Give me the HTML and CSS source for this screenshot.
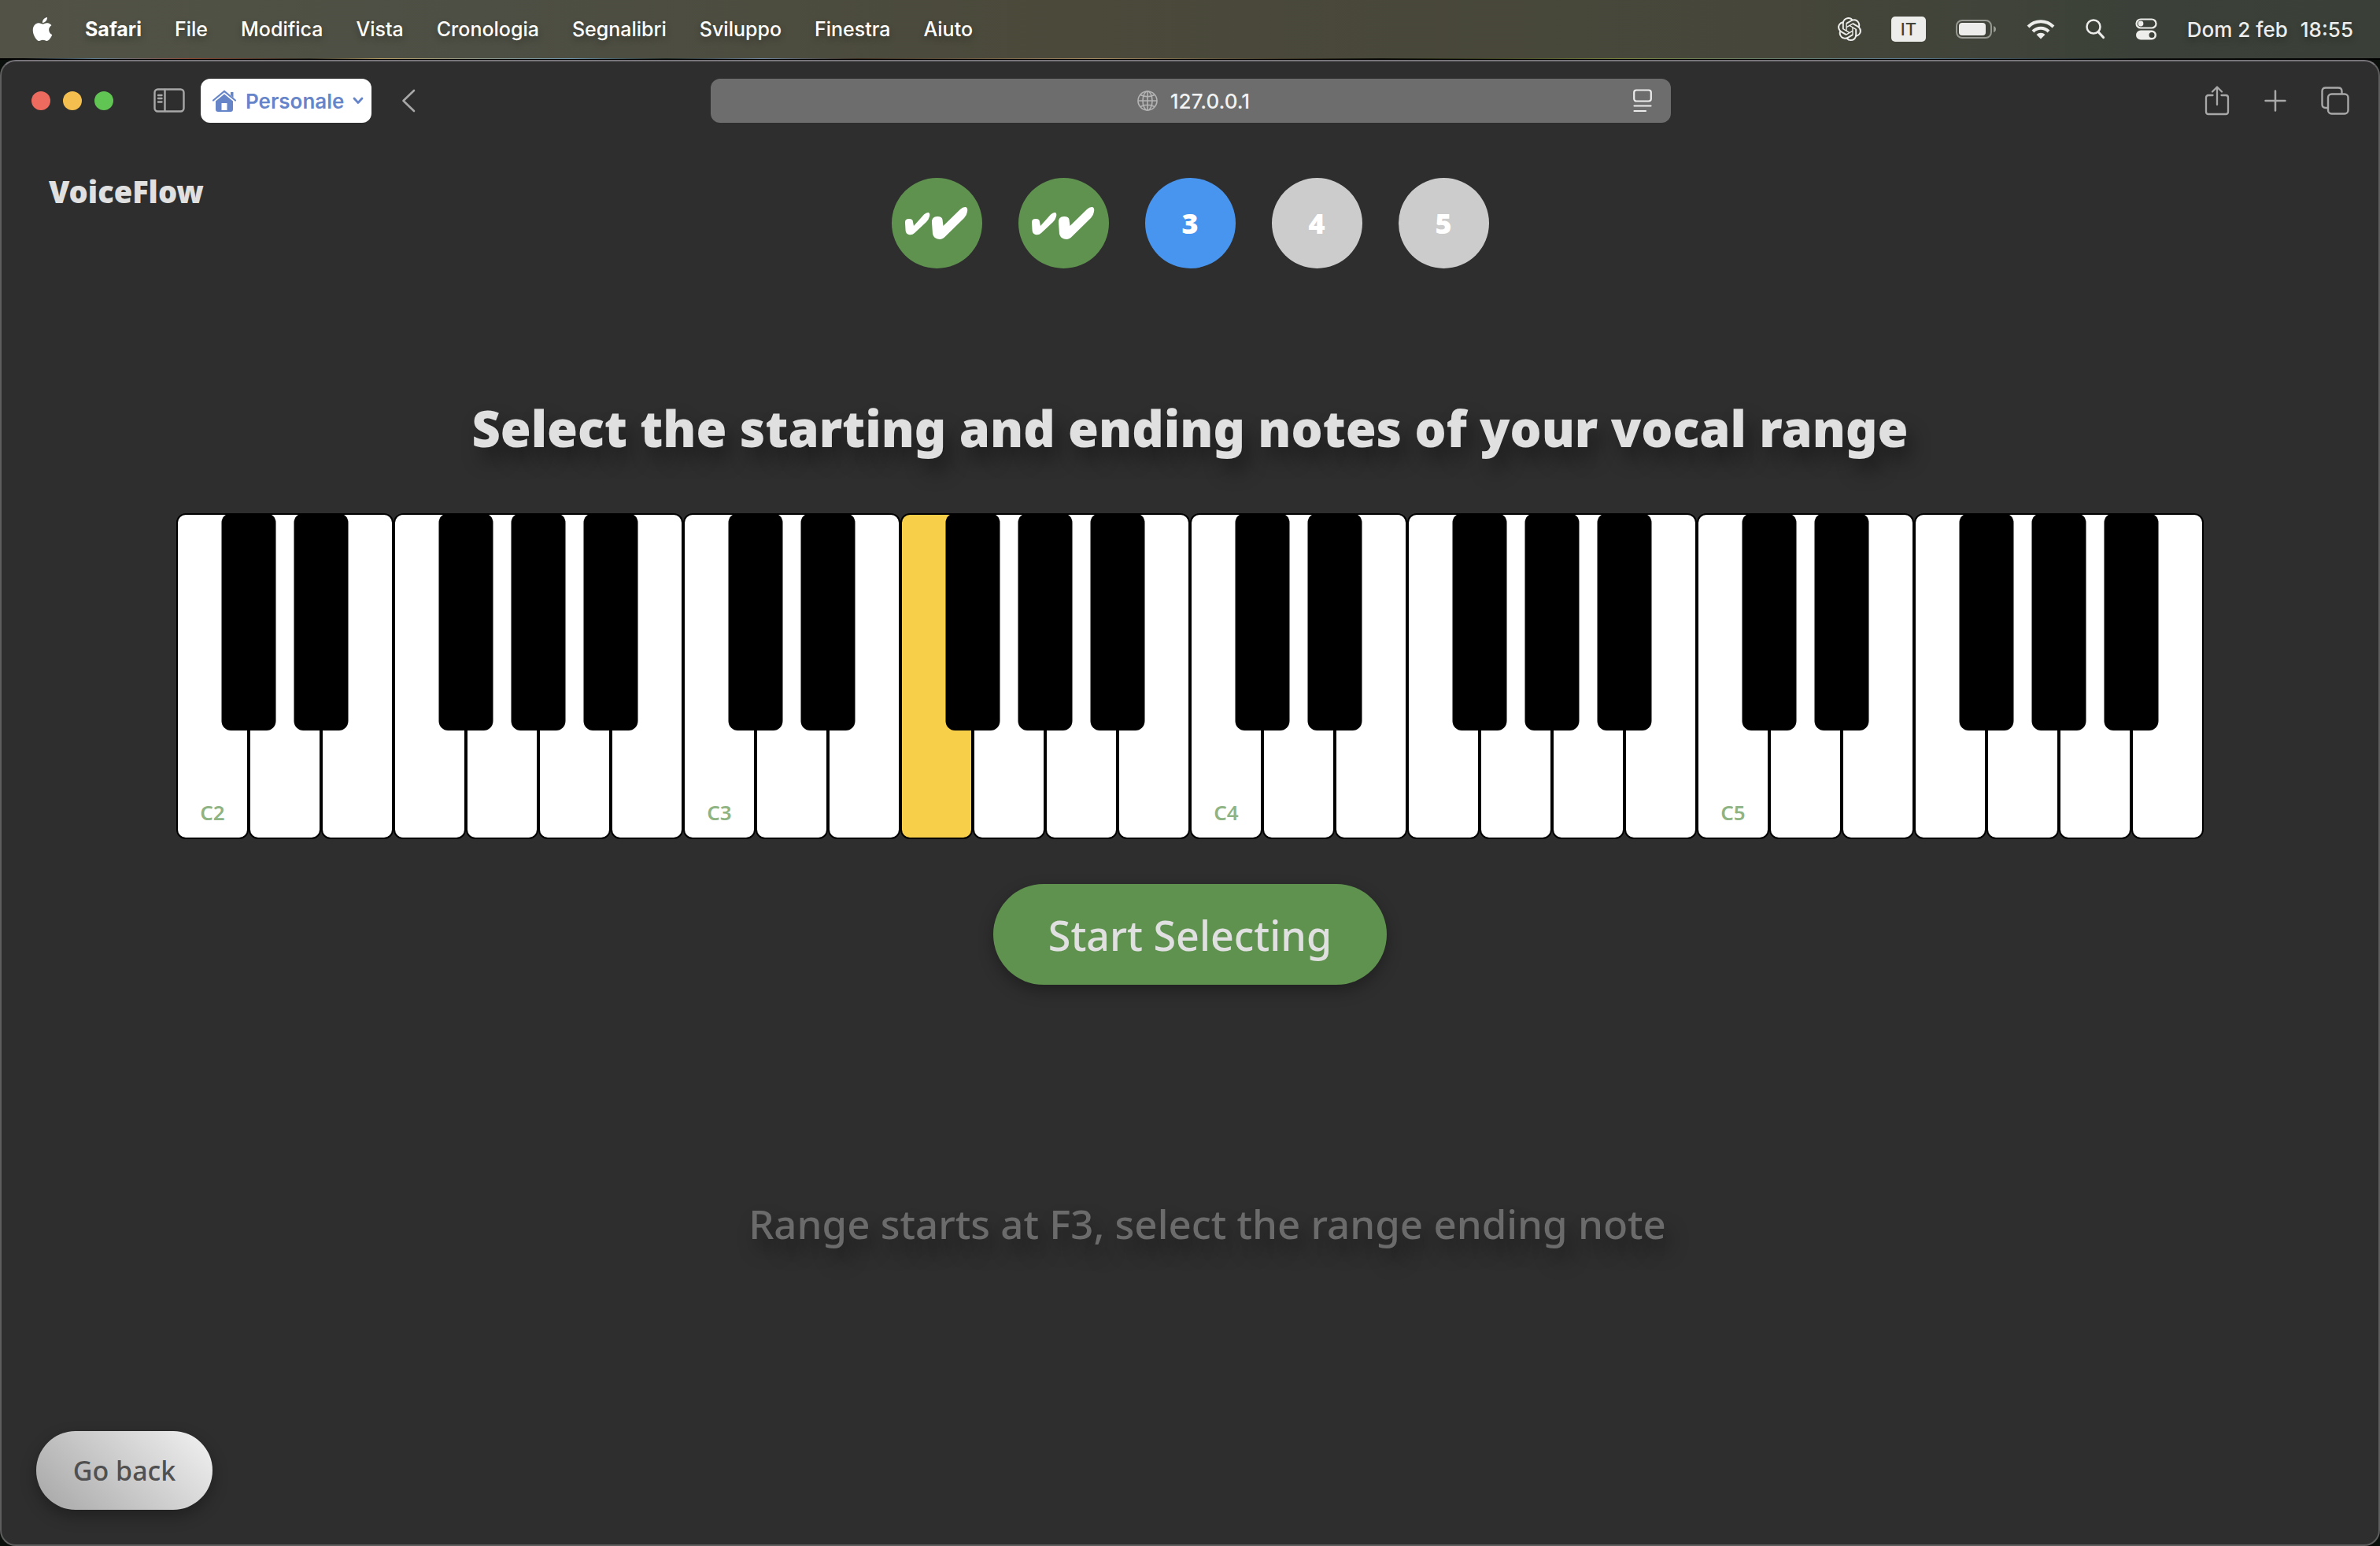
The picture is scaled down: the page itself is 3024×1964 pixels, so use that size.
FILE: index.html
```html
<!DOCTYPE html>
<html lang="en">
<head>
<meta charset="utf-8">
<meta name="viewport" content="width=device-width, initial-scale=1">
<title>VoiceFlow</title>
<link rel="stylesheet" href="styles.css">
</head>
<body>
<header class="menubar">
  <nav class="menus" lang="it">
    <button class="menu menu-apple" aria-label="Apple"><svg width="30" height="32" viewBox="0 0 24 24"><path fill="currentColor" d="M12.152 6.896c-.948 0-2.415-1.078-3.96-1.04-2.04.027-3.91 1.183-4.961 3.014-2.117 3.675-.546 9.103 1.519 12.09 1.013 1.454 2.208 3.09 3.792 3.039 1.52-.065 2.09-.987 3.935-.987 1.831 0 2.35.987 3.96.948 1.637-.026 2.676-1.48 3.676-2.948 1.156-1.688 1.636-3.325 1.662-3.415-.039-.013-3.182-1.221-3.22-4.857-.026-3.04 2.48-4.494 2.597-4.559-1.429-2.09-3.623-2.324-4.39-2.376-2-.156-3.675 1.09-4.61 1.09zM15.53 3.83c.843-1.012 1.4-2.427 1.245-3.83-1.207.052-2.662.805-3.532 1.818-.78.896-1.454 2.338-1.273 3.714 1.338.104 2.715-.688 3.559-1.701"/></svg></button>
    <button class="menu menu-app">Safari</button>
    <button class="menu">File</button>
    <button class="menu">Modifica</button>
    <button class="menu">Vista</button>
    <button class="menu">Cronologia</button>
    <button class="menu">Segnalibri</button>
    <button class="menu">Sviluppo</button>
    <button class="menu">Finestra</button>
    <button class="menu">Aiuto</button>
  </nav>
  <div class="status" lang="it">
    <svg width="30" height="30" viewBox="0 0 24 24"><path fill="currentColor" d="M22.2819 9.8211a5.9847 5.9847 0 0 0-.5157-4.9108 6.0462 6.0462 0 0 0-6.5098-2.9A6.0651 6.0651 0 0 0 4.9807 4.1818a5.9847 5.9847 0 0 0-3.9977 2.9 6.0462 6.0462 0 0 0 .7427 7.0966 5.98 5.98 0 0 0 .511 4.9107 6.051 6.051 0 0 0 6.5146 2.9001A5.9847 5.9847 0 0 0 13.2599 24a6.0557 6.0557 0 0 0 5.7718-4.2058 5.9894 5.9894 0 0 0 3.9977-2.9001 6.0557 6.0557 0 0 0-.7475-7.0729zm-9.022 12.6081a4.4755 4.4755 0 0 1-2.8764-1.0408l.1419-.0804 4.7783-2.7582a.7948.7948 0 0 0 .3927-.6813v-6.7369l2.02 1.1686a.071.071 0 0 1 .038.052v5.5826a4.504 4.504 0 0 1-4.4945 4.4944zm-9.6607-4.1254a4.4708 4.4708 0 0 1-.5346-3.0137l.142.0852 4.783 2.7582a.7712.7712 0 0 0 .7806 0l5.8428-3.3685v2.3324a.0804.0804 0 0 1-.0332.0615L9.74 19.9502a4.4992 4.4992 0 0 1-6.1408-1.6464zM2.3408 7.8956a4.485 4.485 0 0 1 2.3655-1.9728V11.6a.7664.7664 0 0 0 .3879.6765l5.8144 3.3543-2.0201 1.1685a.0757.0757 0 0 1-.071 0l-4.8303-2.7865A4.504 4.504 0 0 1 2.3408 7.872zm16.5963 3.8558L13.1038 8.364 15.1192 7.2a.0757.0757 0 0 1 .071 0l4.8303 2.7913a4.4944 4.4944 0 0 1-.6765 8.1042v-5.6772a.79.79 0 0 0-.407-.667zm2.0107-3.0231l-.142-.0852-4.7735-2.7818a.7759.7759 0 0 0-.7854 0L9.409 9.2297V6.8974a.0662.0662 0 0 1 .0284-.0615l4.8303-2.7866a4.4992 4.4992 0 0 1 6.6802 4.66zM8.3065 12.863l-2.02-1.1638a.0804.0804 0 0 1-.038-.0567V6.0742a4.4992 4.4992 0 0 1 7.3757-3.4537l-.142.0805L8.704 5.459a.7948.7948 0 0 0-.3927.6813zm1.0976-2.3654l2.602-1.4998 2.6069 1.4998v2.9994l-2.5974 1.4997-2.6067-1.4997Z"/></svg>
    <span class="input-source">IT</span>
    <svg width="52" height="24" viewBox="0 0 52 24"><rect x="1" y="1" width="44" height="22" rx="7" fill="none" stroke="currentColor" stroke-width="2" opacity=".5"/><rect x="4" y="4" width="34" height="16" rx="4" fill="currentColor"/><path d="M48 8q3 1 3 4t-3 4z" fill="currentColor" opacity=".5"/></svg>
    <svg width="36" height="26" viewBox="0 0 36 26"><g fill="none" stroke="currentColor" stroke-width="4"><path d="M2 10a22.500 22.500 0 0 1 32 0"/><path d="M8 16a14 14 0 0 1 20 0"/></g><path fill="currentColor" d="M18 25.500l-5.500-5.600a7.800 7.800 0 0 1 11 0z"/></svg>
    <svg width="26" height="28" viewBox="0 0 26 28"><g fill="none" stroke="currentColor" stroke-linecap="round"><circle cx="11" cy="11" r="8.500" stroke-width="2.500"/><path d="M17 17.500l6.500 7" stroke-width="3.200"/></g></svg>
    <svg width="28" height="28" viewBox="0 0 28 28"><rect x="1.500" y="1.500" width="25" height="11" rx="5.500" fill="none" stroke="currentColor" stroke-width="2.200"/><circle cx="7" cy="7" r="3.400" fill="currentColor"/><path fill="currentColor" fill-rule="evenodd" d="M7 15.500h14a6 6 0 0 1 0 12H7a6 6 0 0 1 0-12zm14 2.500a3.500 3.500 0 1 0 0 7 3.500 3.500 0 0 0 0-7z"/></svg>
    <time class="clock"><span>Dom 2 feb</span><span>18:55</span></time>
  </div>
</header>
<div class="wallpaper"></div>

<div class="window">
  <div class="toolbar" lang="it">
    <div class="toolbar-left">
      <div class="lights">
        <button class="light light-close" aria-label="Chiudi"></button>
        <button class="light light-minimize" aria-label="Riduci"></button>
        <button class="light light-zoom" aria-label="Ingrandisci"></button>
      </div>
      <button class="tool tool-sidebar" aria-label="Barra laterale"><svg width="40" height="32" viewBox="0 0 40 32"><g fill="none" stroke="currentColor" stroke-width="2.400" stroke-linecap="round"><rect x="1.500" y="1.500" width="37" height="28" rx="4"/><path d="M14.500 2v27M6 9h4.500M6 13h4.500M6 17.500h4.500"/></g></svg></button>
      <button class="profile">
        <svg width="32" height="28" viewBox="0 0 32 28"><path d="M2 13.500L16 2l14 11.500" fill="none" stroke="currentColor" stroke-width="2.200" stroke-linecap="round"/><path fill="currentColor" fill-rule="evenodd" d="M16 5.500l11 9V25q0 3-3 3H8q-3 0-3-3V14.500zM12.500 17v9h7v-9z"/><path d="M24 3h3.500v7L24 7z" fill="currentColor"/></svg>
        <span>Personale</span>
        <svg width="14" height="10" viewBox="0 0 14 10"><path d="M2 2l5 5.500L12 2" fill="none" stroke="currentColor" stroke-width="2.800" stroke-linecap="round" stroke-linejoin="round"/></svg>
      </button>
      <button class="tool tool-back" aria-label="Indietro"><svg width="18" height="30" viewBox="0 0 18 30"><path d="M16 2L2.500 15 16 28" fill="none" stroke="currentColor" stroke-width="2.600" stroke-linecap="round" stroke-linejoin="round"/></svg></button>
    </div>
    <div class="address">
      <label class="address-field">
        <svg width="26" height="26" viewBox="0 0 26 26"><g fill="none" stroke="currentColor" stroke-width="1.600"><circle cx="13" cy="13" r="12"/><ellipse cx="13" cy="13" rx="6" ry="12"/><path d="M13 1v24M1 13h24M4 5.500q9 4.500 18 0M4 20.500q9-4.500 18 0"/></g></svg>
        <input type="text" value="127.0.0.1" size="9" aria-label="Indirizzo">
      </label>
      <button class="reader" aria-label="Menu pagina"><svg width="24" height="30" viewBox="0 0 24 30"><g fill="none" stroke="currentColor" stroke-width="2.200" stroke-linecap="round"><rect x="1.200" y="1.500" width="21.600" height="14" rx="3"/><path d="M1.500 21.500h21M1.500 28H16"/></g></svg></button>
    </div>
    <div class="toolbar-right">
      <button class="tool" aria-label="Condividi"><svg width="32" height="38" viewBox="0 0 32 38"><g fill="none" stroke="currentColor" stroke-width="2.300" stroke-linecap="round" stroke-linejoin="round"><path d="M10.500 12H5q-3 0-3 3v18q0 3 3 3h22q3 0 3-3V15q0-3-3-3h-5.500M16 24V2M10 7.500L16 1.500l6 6"/></g></svg></button>
      <button class="tool" aria-label="Nuovo pannello"><svg width="28" height="28" viewBox="0 0 28 28"><path d="M14 1.500v25M1.500 14h25" stroke="currentColor" stroke-width="2.500" stroke-linecap="round"/></svg></button>
      <button class="tool" aria-label="Panoramica pannelli"><svg width="36" height="36" viewBox="0 0 36 36"><g fill="none" stroke="currentColor" stroke-width="2.400"><rect x="9" y="9.500" width="25.500" height="25" rx="4.500"/><path d="M9 27H6q-4.500 0-4.500-4.500V6Q1.500 1.500 6 1.500h16q4.500 0 4.500 4.500v3.500"/></g></svg></button>
    </div>
  </div>

  <main class="app">
    <div class="app-header">
      <a class="brand" href="#">VoiceFlow</a>
      <ol class="steps">
        <li class="step step-done" aria-label="1"><svg viewBox="0 0 115 115"><g fill="currentColor"><path d="M17 57Q16.500 52 22 52 27 52 27 56L28 61 41 46.500Q44 43.500 47 44 49 45.500 48 49 47 53 44 56L29 70Q26 73 21.500 72 18 71 17.600 67Z"/><path d="M51 57Q50.500 49 58 49 64 49 64.500 53L65.500 61 87 40Q90.500 36.500 94 37 97 38 96 43 95.500 47 92 51L68 74.500Q64 79 58 77.500 53 76 52 71Z"/></g></svg></li>
        <li class="step step-done" aria-label="2"><svg viewBox="0 0 115 115"><g fill="currentColor"><path d="M17 57Q16.500 52 22 52 27 52 27 56L28 61 41 46.500Q44 43.500 47 44 49 45.500 48 49 47 53 44 56L29 70Q26 73 21.500 72 18 71 17.600 67Z"/><path d="M51 57Q50.500 49 58 49 64 49 64.500 53L65.500 61 87 40Q90.500 36.500 94 37 97 38 96 43 95.500 47 92 51L68 74.500Q64 79 58 77.500 53 76 52 71Z"/></g></svg></li>
        <li class="step step-current" aria-current="step">3</li>
        <li class="step">4</li>
        <li class="step">5</li>
      </ol>
    </div>

    <h1 class="title">Select the starting and ending notes of your vocal range</h1>

    <ul class="piano">
      <li class="key"><button class="white">C2</button><button class="black" aria-label="C#2"></button></li>
      <li class="key"><button class="white" aria-label="D2"></button><button class="black" aria-label="D#2"></button></li>
      <li class="key"><button class="white" aria-label="E2"></button></li>
      <li class="key"><button class="white" aria-label="F2"></button><button class="black" aria-label="F#2"></button></li>
      <li class="key"><button class="white" aria-label="G2"></button><button class="black" aria-label="G#2"></button></li>
      <li class="key"><button class="white" aria-label="A2"></button><button class="black" aria-label="A#2"></button></li>
      <li class="key"><button class="white" aria-label="B2"></button></li>
      <li class="key"><button class="white">C3</button><button class="black" aria-label="C#3"></button></li>
      <li class="key"><button class="white" aria-label="D3"></button><button class="black" aria-label="D#3"></button></li>
      <li class="key"><button class="white" aria-label="E3"></button></li>
      <li class="key"><button class="white selected" aria-label="F3"></button><button class="black" aria-label="F#3"></button></li>
      <li class="key"><button class="white" aria-label="G3"></button><button class="black" aria-label="G#3"></button></li>
      <li class="key"><button class="white" aria-label="A3"></button><button class="black" aria-label="A#3"></button></li>
      <li class="key"><button class="white" aria-label="B3"></button></li>
      <li class="key"><button class="white">C4</button><button class="black" aria-label="C#4"></button></li>
      <li class="key"><button class="white" aria-label="D4"></button><button class="black" aria-label="D#4"></button></li>
      <li class="key"><button class="white" aria-label="E4"></button></li>
      <li class="key"><button class="white" aria-label="F4"></button><button class="black" aria-label="F#4"></button></li>
      <li class="key"><button class="white" aria-label="G4"></button><button class="black" aria-label="G#4"></button></li>
      <li class="key"><button class="white" aria-label="A4"></button><button class="black" aria-label="A#4"></button></li>
      <li class="key"><button class="white" aria-label="B4"></button></li>
      <li class="key"><button class="white">C5</button><button class="black" aria-label="C#5"></button></li>
      <li class="key"><button class="white" aria-label="D5"></button><button class="black" aria-label="D#5"></button></li>
      <li class="key"><button class="white" aria-label="E5"></button></li>
      <li class="key"><button class="white" aria-label="F5"></button><button class="black" aria-label="F#5"></button></li>
      <li class="key"><button class="white" aria-label="G5"></button><button class="black" aria-label="G#5"></button></li>
      <li class="key"><button class="white" aria-label="A5"></button><button class="black" aria-label="A#5"></button></li>
      <li class="key"><button class="white" aria-label="B5"></button></li>
    </ul>

    <button class="start">Start Selecting</button>
    <p class="hint">Range starts at F3, select the range ending note</p>
    <button class="back">Go back</button>
  </main>
</div>
</body>
</html>
```
FILE: styles.css
```css
:root {
  --system: Inter, "Liberation Sans", sans-serif;
  --app: "Noto Sans", "Open Sans", sans-serif;
  --surface: #2e2e2e;
  --green: #5f924f;
  --ink: #e0e0e0;
}

*,
*::before,
*::after {
  box-sizing: border-box;
}

body {
  margin: 0;
  min-height: 100vh;
  display: flex;
  flex-direction: column;
  background: #0b0f0b;
  font-family: var(--system);
  font-size: 26px;
}

button,
input {
  margin: 0;
  padding: 0;
  border: 0;
  background: none;
  color: inherit;
  font: inherit;
}

svg {
  display: block;
  flex: none;
}

/* System menu bar */
.menubar {
  height: 74px;
  padding: 0 34px 0 39px;
  display: flex;
  justify-content: space-between;
  align-items: center;
  background: linear-gradient(90deg, #525346 0%, #4e4f44 20%, #4a493a 45%, #46463a 75%, #3b4138 90%, #3a4037 100%);
  color: #fff;
  text-shadow: 0 4px 8px rgba(0, 0, 0, .3);
}

.menus {
  display: flex;
  align-items: center;
  gap: 42px;
}

.menu {
  text-shadow: inherit;
  font-weight: 500;
  font-size: 25px;
}

.menu-apple {
  margin-right: -3px;
}

.menu-app {
  font-weight: 700;
}

.status {
  display: flex;
  align-items: center;
  gap: 38px;
  color: #ededeb;
}

.input-source {
  width: 44px;
  height: 32px;
  border-radius: 5px;
  background: #ededeb;
  color: #41443a;
  font-size: 22px;
  font-weight: 500;
  line-height: 32px;
  text-align: center;
  text-shadow: none;
}

.clock {
  display: flex;
  gap: 16px;
  font-size: 26px;
  font-weight: 500;
}

.wallpaper {
  height: 2px;
  background: linear-gradient(90deg, #000 0 1%, #5d7d92 4%, #8c4430 8%, #2b2a20 13%, #b39b62 16%, #6c94ab 24%, #1c2620 28%, #6f86a0 32%, #3b2c20 36%, #a58b64 46%, #10120a 58%, #75813c 68%, #5b7b92 80%, #101410 90%, #000);
  border-bottom: 1px solid #000;
}

/* Browser window */
.window {
  flex: 1;
  display: flex;
  flex-direction: column;
  border: 2px solid #5e5e5e;
  border-top-color: #77747a;
  border-radius: 20px;
  background: var(--surface);
}

.toolbar {
  display: grid;
  grid-template-columns: 1fr 1220px 1fr;
  align-items: center;
  padding: 22px 37px 22px 38px;
  color: #a8a8a8;
}

.toolbar-left,
.toolbar-right,
.lights {
  display: flex;
  align-items: center;
}

.lights {
  gap: 16px;
}

.light {
  width: 24px;
  height: 24px;
  border-radius: 50%;
}

.light-close {
  background: #ed6a5e;
}

.light-minimize {
  background: #f5bf4f;
}

.light-zoom {
  background: #61c554;
}

.tool-sidebar {
  margin-left: 51px;
}

.profile {
  height: 56px;
  margin: 0 38px 0 20px;
  padding: 0 10px 0 14px;
  display: flex;
  align-items: center;
  gap: 11px;
  border-radius: 12px;
  background: #fff;
  color: #6685c9;
  font-size: 26px;
  font-weight: 600;
}

.toolbar-right {
  justify-content: flex-end;
  gap: 44px;
}

.address {
  height: 56px;
  padding: 0 24px;
  display: grid;
  grid-template-columns: 1fr auto 1fr;
  align-items: center;
  border-radius: 12px;
  background: #6d6d6d;
}

.address-field {
  grid-column: 2;
  display: flex;
  align-items: center;
  gap: 16px;
  padding-left: 8px;
  color: #b4b4b4;
}

.address-field input {
  field-sizing: content;
  color: #f2f2f2;
  font-size: 26px;
  font-weight: 500;
}

.reader {
  justify-self: end;
  color: #ececec;
}

/* VoiceFlow page */
.app {
  flex: 1;
  display: flex;
  flex-direction: column;
  align-items: center;
  padding: 48px 44px 44px;
  color: var(--ink);
  font-family: var(--app);
}

.app-header {
  align-self: stretch;
  display: grid;
  grid-template-columns: 1fr auto 1fr;
  align-items: start;
}

.brand {
  padding-left: 16px;
  color: var(--ink);
  font-size: 38px;
  font-weight: 900;
  line-height: 34px;
  text-decoration: none;
}

.steps {
  margin: 0;
  padding: 0;
  display: flex;
  gap: 46px;
  list-style: none;
}

.step {
  width: 115px;
  height: 115px;
  border-radius: 50%;
  background: #ccc;
  color: #fff;
  font-size: 36px;
  font-weight: 900;
  line-height: 115px;
  text-align: center;
}

.step-done {
  background: var(--green);
}

.step-current {
  background: #4895ef;
}

.title {
  margin: 163px 0 68px;
  font-size: 63px;
  font-weight: 900;
  line-height: 80px;
  text-shadow: 8px 16px 24px rgba(0, 0, 0, .4);
}

.piano {
  align-self: stretch;
  display: flex;
  margin: 0 178px;
  padding: 0;
  list-style: none;
}

.key {
  position: relative;
  flex: 1;
}

.white {
  display: flex;
  align-items: flex-end;
  justify-content: center;
  width: 100%;
  height: 414px;
  padding-bottom: 14px;
  border: 2px solid #000;
  border-radius: 12px;
  background: #fff;
  color: #8fb484;
  font-size: 26px;
  font-weight: 600;
}

.selected {
  background: #f8cf48;
}

/* Black keys straddle the edge between two white keys */
.black {
  position: absolute;
  top: 0;
  left: 100%;
  z-index: 1;
  width: 75%;
  height: 276px;
  transform: translateX(-50%);
  border-radius: 12px;
  background: #000;
}

.start {
  width: 500px;
  height: 128px;
  margin-top: 57px;
  border-radius: 64px;
  background: var(--green);
  font-size: 52px;
  font-weight: 500;
  box-shadow: 0 8px 20px rgba(0, 0, 0, .3);
}

.hint {
  margin: 271px 0 0 44px;
  color: #6b6b6b;
  font-size: 51px;
  font-weight: 500;
  line-height: 64px;
  text-shadow: 8px 16px 24px rgba(0, 0, 0, .4);
}

.back {
  width: 224px;
  height: 100px;
  margin-top: auto;
  align-self: flex-start;
  border-radius: 50px;
  background: linear-gradient(45deg, #a6a6a6, #f2f2f2);
  color: #505050;
  font-size: 34px;
  font-weight: 500;
  box-shadow: 0 8px 20px rgba(0, 0, 0, .3);
}
```
